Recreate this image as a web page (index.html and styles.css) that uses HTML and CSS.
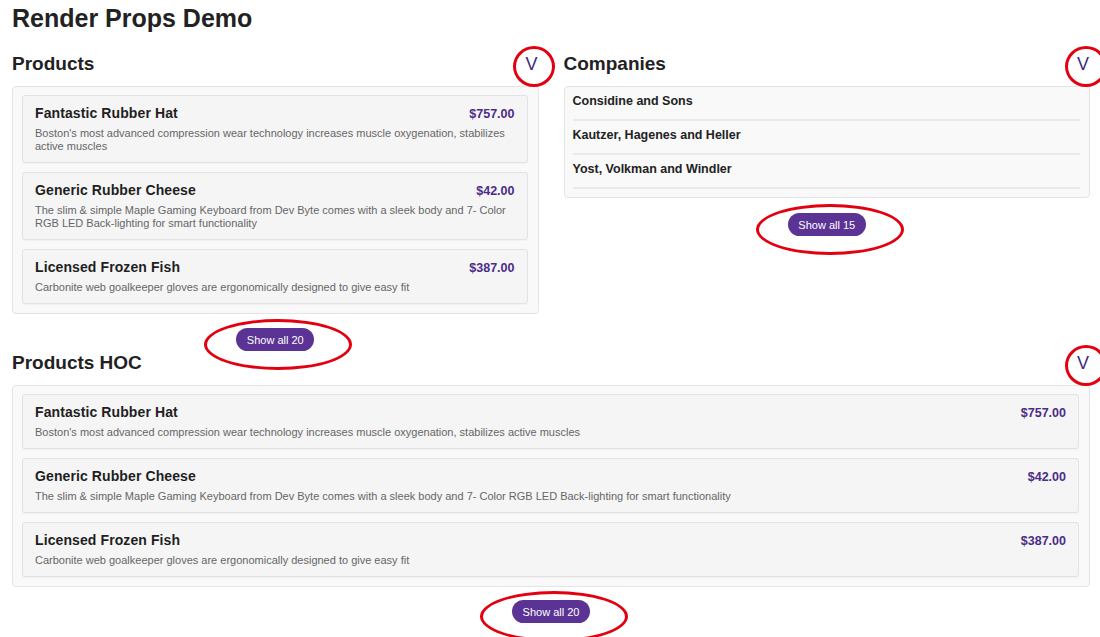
FILE: index.html
```html
<!DOCTYPE html>
<html lang="en">
<head>
<meta charset="utf-8">
<title>Render Props Demo</title>
<link rel="stylesheet" href="styles.css">
</head>
<body>
<div class="page">
  <h1 class="title">Render Props Demo</h1>

  <div class="columns">
    <section class="section">
      <div class="section-head">
        <h2 class="section-title">Products</h2>
        <button class="toggle annotated-ring">V</button>
      </div>
      <div class="panel panel-cards">
        <div class="card">
          <div class="card-top"><span class="card-name">Fantastic Rubber Hat</span><span class="card-price">$757.00</span></div>
          <p class="card-desc">Boston's most advanced compression wear technology increases muscle oxygenation, stabilizes active muscles</p>
        </div>
        <div class="card">
          <div class="card-top"><span class="card-name">Generic Rubber Cheese</span><span class="card-price">$42.00</span></div>
          <p class="card-desc">The slim &amp; simple Maple Gaming Keyboard from Dev Byte comes with a sleek body and 7- Color RGB LED Back-lighting for smart functionality</p>
        </div>
        <div class="card">
          <div class="card-top"><span class="card-name">Licensed Frozen Fish</span><span class="card-price">$387.00</span></div>
          <p class="card-desc">Carbonite web goalkeeper gloves are ergonomically designed to give easy fit</p>
        </div>
      </div>
      <div class="more"><button class="more-btn annotated-ellipse">Show all 20</button></div>
    </section>

    <section class="section">
      <div class="section-head">
        <h2 class="section-title">Companies</h2>
        <button class="toggle annotated-ring">V</button>
      </div>
      <div class="panel panel-list">
        <div class="row">Considine and Sons</div>
        <div class="row">Kautzer, Hagenes and Heller</div>
        <div class="row">Yost, Volkman and Windler</div>
      </div>
      <div class="more more-companies"><button class="more-btn annotated-ellipse">Show all 15</button></div>
    </section>
  </div>

  <section class="section">
    <div class="section-head">
      <h2 class="section-title">Products HOC</h2>
      <button class="toggle annotated-ring">V</button>
    </div>
    <div class="panel panel-cards">
      <div class="card">
        <div class="card-top"><span class="card-name">Fantastic Rubber Hat</span><span class="card-price">$757.00</span></div>
        <p class="card-desc">Boston's most advanced compression wear technology increases muscle oxygenation, stabilizes active muscles</p>
      </div>
      <div class="card">
        <div class="card-top"><span class="card-name">Generic Rubber Cheese</span><span class="card-price">$42.00</span></div>
        <p class="card-desc">The slim &amp; simple Maple Gaming Keyboard from Dev Byte comes with a sleek body and 7- Color RGB LED Back-lighting for smart functionality</p>
      </div>
      <div class="card">
        <div class="card-top"><span class="card-name">Licensed Frozen Fish</span><span class="card-price">$387.00</span></div>
        <p class="card-desc">Carbonite web goalkeeper gloves are ergonomically designed to give easy fit</p>
      </div>
    </div>
    <div class="more more-last"><button class="more-btn annotated-ellipse">Show all 20</button></div>
  </section>
</div>
</body>
</html>
```

FILE: styles.css
```css
* { box-sizing: border-box; }

html, body {
  margin: 0;
  background: #ffffff;
  font-family: "Liberation Sans", Arial, sans-serif;
  color: #222222;
}

.page {
  padding: 0 10px 40px 12px;
}

.title {
  margin: 4px 0 20px;
  font-size: 25px;
  line-height: 28px;
  font-weight: bold;
  color: #222;
}

.columns {
  display: grid;
  grid-template-columns: 1fr 1fr;
  column-gap: 25px;
  align-items: start;
}

.section-head {
  display: flex;
  justify-content: space-between;
  align-items: center;
  height: 24px;
  margin-bottom: 10px;
}

.section-title {
  margin: 0;
  font-size: 19px;
  line-height: 24px;
  font-weight: bold;
  color: #222;
}

.toggle {
  position: relative;
  border: none;
  background: none;
  padding: 0;
  margin: 0 1px 0 0;
  font-family: "Liberation Sans", Arial, sans-serif;
  font-size: 18px;
  line-height: 20px;
  color: #3a2a7c;
  cursor: pointer;
}

.annotated-ring::after {
  content: "";
  position: absolute;
  left: 50%;
  top: 50%;
  width: 36px;
  height: 35px;
  margin-left: -18px;
  margin-top: -18px;
  border: 3px solid #e3000f;
  border-radius: 50%;
}

.panel {
  background: #f9f9f9;
  border: 1px solid #e4e4e4;
  border-radius: 4px;
}

.panel-cards {
  padding: 8px 10px 9px 9px;
  display: flex;
  flex-direction: column;
  gap: 9px;
}

.card {
  background: #f5f5f5;
  border: 1px solid #e2e2e2;
  border-radius: 3px;
  padding: 8px 12px 9px;
  box-shadow: 0 1px 1px rgba(0,0,0,0.03);
}

.card-top {
  display: flex;
  justify-content: space-between;
  align-items: baseline;
  margin-bottom: 5px;
}

.card-name {
  font-size: 14px;
  line-height: 18px;
  font-weight: bold;
  letter-spacing: 0.1px;
  color: #1f1f1f;
}

.card-price {
  font-size: 12.5px;
  font-weight: bold;
  color: #4b2c88;
}

.card-desc {
  margin: 0;
  font-size: 11px;
  line-height: 13px;
  color: #666666;
}

.panel-list {
  padding: 0 9px 8px 8px;
}

.row {
  padding: 6px 0 9px;
  font-size: 12.5px;
  line-height: 17px;
  font-weight: bold;
  color: #222;
  border-bottom: 2px solid #e9e9e9;
}

.more {
  display: flex;
  justify-content: center;
  padding-top: 14px;
}

.more-companies {
  padding-top: 15px;
}

.more-last {
  padding-top: 13px;
}

.more-btn {
  position: relative;
  width: 78px;
  height: 23px;
  border: none;
  border-radius: 12px;
  background: #5a3395;
  color: #ffffff;
  font-family: "Liberation Sans", Arial, sans-serif;
  font-size: 11px;
  padding: 0;
  cursor: pointer;
}

.annotated-ellipse::after {
  content: "";
  position: absolute;
  left: 50%;
  top: 50%;
  width: 142px;
  height: 45px;
  margin-left: -71px;
  margin-top: -21px;
  border: 3px solid #e3000f;
  border-radius: 50%;
}
```
